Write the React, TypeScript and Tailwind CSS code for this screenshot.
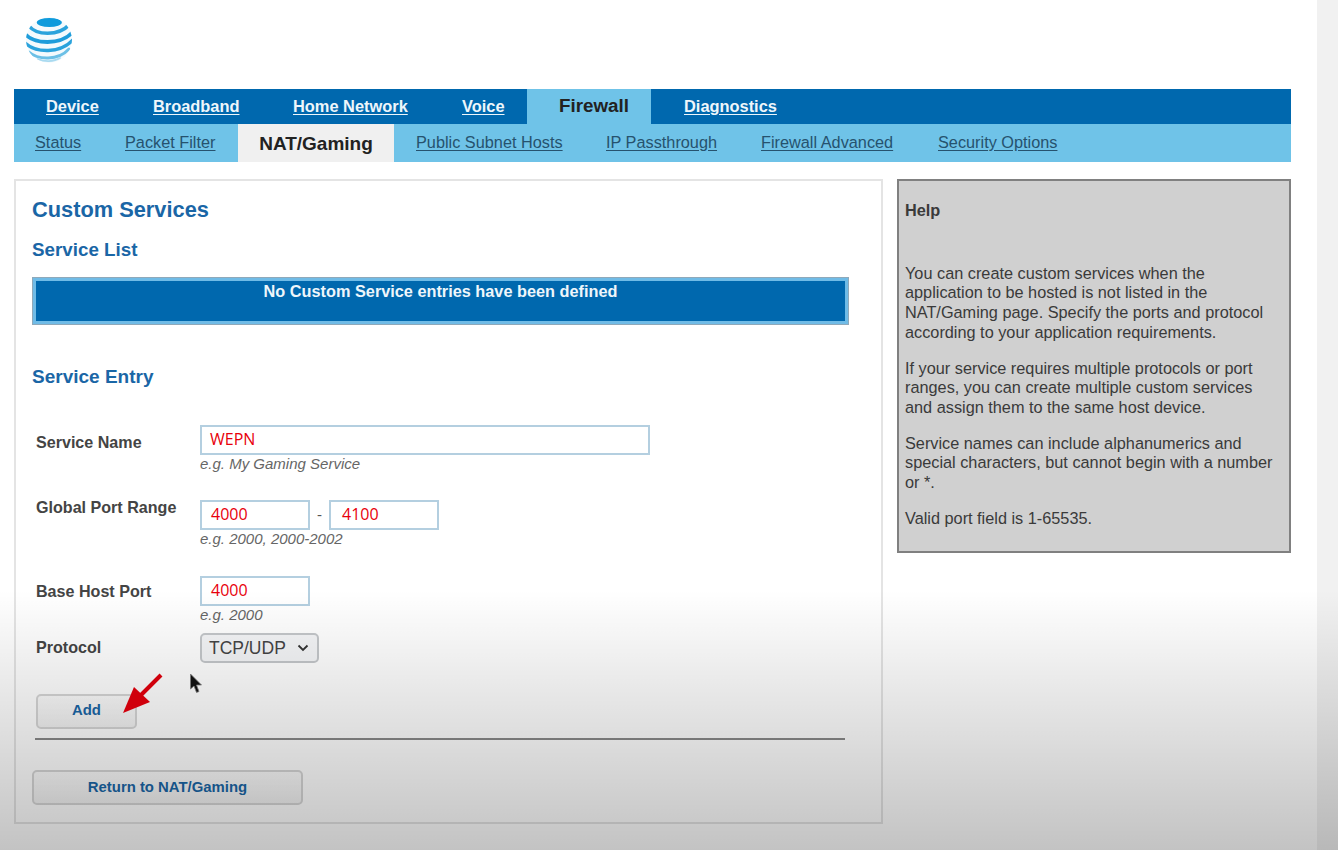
import React from "react";

const mainTabs = [
  { label: "Device", cls: "ml-[32px] w-[107px]" },
  { label: "Broadband", cls: "w-[140px]" },
  { label: "Home Network", cls: "w-[169px]" },
];
const subTabs = [
  { label: "Status", cls: "ml-[21px] w-[90px]" },
  { label: "Packet Filter", cls: "w-[113px]" },
];
const subTabsRight = [
  { label: "Public Subnet Hosts", cls: "ml-[22px] w-[190px]" },
  { label: "IP Passthrough", cls: "w-[155px]" },
  { label: "Firewall Advanced", cls: "w-[177px]" },
  { label: "Security Options", cls: "" },
];

function Logo() {
  return (
    <svg width="50" height="50" viewBox="0 0 50 50" className="ml-[10px] block">
      <defs>
        <clipPath id="globe">
          <circle cx="25" cy="25" r="23" />
        </clipPath>
      </defs>
      <g clipPath="url(#globe)" fill="none" strokeLinecap="round">
        <circle cx="25" cy="25" r="23" fill="#f4fafd" />
        <ellipse cx="25.3" cy="7.5" rx="12.5" ry="4.6" fill="#0f9bdc" />
        <path d="M5 11 C12 20 34 22 46 9" stroke="#2ba3dc" strokeWidth="3.6" />
        <path d="M1 19 C10 29 36 31 49 17" stroke="#1f9ddb" strokeWidth="3.8" />
        <path d="M1 28 C12 38 36 39 49 25" stroke="#2ba3dc" strokeWidth="3.4" />
        <path d="M5 37 C14 45 34 46 45 34" stroke="#6cc0e6" strokeWidth="2.8" />
        <path d="M14 44 C20 47 30 47 36 43" stroke="#a9daf0" strokeWidth="1.8" />
      </g>
    </svg>
  );
}

function MainLink({ label, cls }: { label: string; cls: string }) {
  return <a className={`block text-[16.4px] font-bold text-[#eef6fb] underline underline-offset-2 ${cls}`}>{label}</a>;
}

function SubLink({ label, cls }: { label: string; cls: string }) {
  return <a className={`block pb-[2px] text-[16.3px] text-[#26526e] underline underline-offset-2 ${cls}`}>{label}</a>;
}

function TextBox({ value, cls }: { value: string; cls: string }) {
  return (
    <div className={`h-[30px] border-2 border-[#b4cfe0] bg-white text-[16px] leading-[24px] text-[#e8000b] font-['Open_Sans',sans-serif] ${cls}`}>
      {value}
    </div>
  );
}

function Hint({ children }: { children: React.ReactNode }) {
  return <div className="text-[15px] italic leading-[18px] text-[#666666]">{children}</div>;
}

function Label({ children, cls = "" }: { children: React.ReactNode; cls?: string }) {
  return <div className={`w-[164px] text-[16.1px] font-bold leading-[20px] text-[#444444] ${cls}`}>{children}</div>;
}

export default function App() {
  return (
    <div className="relative flex h-[850px] w-[1338px] overflow-hidden bg-white font-['Liberation_Sans',sans-serif]">
      <div className="w-[1317px] pl-[14px] pr-[26px]">
        <div className="h-[89px] pt-[15px]">
          <Logo />
        </div>

        <nav className="flex h-[35px] items-center bg-[#0068ae]">
          {mainTabs.map((t) => (
            <MainLink key={t.label} {...t} />
          ))}
          <MainLink label="Voice" cls="w-[65px]" />
          <div className="flex h-[35px] w-[124px] items-center justify-center bg-[#6fc3e8] pl-[10px] text-[18.8px] font-bold text-[#222222]">
            Firewall
          </div>
          <MainLink label="Diagnostics" cls="ml-[33px]" />
        </nav>

        <nav className="flex h-[38px] items-center bg-[#6fc3e8]">
          {subTabs.map((t) => (
            <SubLink key={t.label} {...t} />
          ))}
          <div className="flex h-[38px] w-[156px] items-center justify-center bg-[#f0f0f0] pt-[2px] text-[19px] font-bold text-[#222222]">
            NAT/Gaming
          </div>
          {subTabsRight.map((t) => (
            <SubLink key={t.label} {...t} />
          ))}
        </nav>

        <div className="mt-[17px] flex items-start gap-[14px]">
          <section className="h-[645px] w-[869px] border-2 border-[#e4e4e4] bg-white pl-[16px]">
            <h1 className="mt-[15px] text-[21.8px] font-bold leading-[28px] text-[#1a66a6]">Custom Services</h1>
            <h2 className="mt-[14px] text-[18.8px] font-bold leading-[24px] text-[#1a66a6]">Service List</h2>

            <div className="mt-[16px] ml-[1px] h-[46px] w-[815px] border-[3px] border-[#70bbe6] bg-[#0068ae] text-center shadow-[0_0_0_1px_#8fa9ba]">
              <div className="text-[16.3px] font-bold leading-[20px] text-[#eef6fb]">No Custom Service entries have been defined</div>
            </div>

            <h2 className="mt-[41px] text-[19px] font-bold leading-[24px] text-[#1a66a6]">Service Entry</h2>

            <div className="ml-[4px]">
              <div className="mt-[36px] flex">
                <Label cls="mt-[7px]">Service Name</Label>
                <div>
                  <TextBox value="WEPN" cls="w-[450px] pl-[8px]" />
                  <Hint>e.g. My Gaming Service</Hint>
                </div>
              </div>

              <div className="mt-[27px] flex">
                <Label cls="-mt-[3px]">Global Port Range</Label>
                <div>
                  <div className="flex items-center">
                    <TextBox value="4000" cls="w-[110px] pl-[9px]" />
                    <span className="w-[19px] text-center text-[15px] text-[#555555]">-</span>
                    <TextBox value="4100" cls="w-[110px] pl-[11px]" />
                  </div>
                  <Hint>e.g. 2000, 2000-2002</Hint>
                </div>
              </div>

              <div className="mt-[28px] flex">
                <Label cls="mt-[5px]">Base Host Port</Label>
                <div>
                  <TextBox value="4000" cls="w-[110px] pl-[9px]" />
                  <Hint>e.g. 2000</Hint>
                </div>
              </div>

              <div className="mt-[9px] flex items-center">
                <Label cls="pb-[2px]">Protocol</Label>
                <div className="flex h-[30px] w-[119px] items-center rounded-[5px] border-2 border-[#c4c7ca] bg-[#f4f5f7] pl-[7px] text-[17.5px] text-[#444444]">
                  TCP/UDP
                  <svg width="12" height="8" viewBox="0 0 12 8" className="ml-[11px]">
                    <path d="M1.5 1.5 L6 6 L10.5 1.5" stroke="#333333" strokeWidth="1.8" fill="none" />
                  </svg>
                </div>
              </div>

              <div className="mt-[31px] flex h-[35px] w-[101px] items-center justify-center rounded-[5px] border-2 border-[#d6d6d6] bg-gradient-to-b from-[#fbfbfb] to-[#f2f2f2] pb-[3px] text-[14.9px] font-bold text-[#1a66a6]">
                Add
              </div>

              <div className="mt-[9px] -ml-[1px] h-[2px] w-[810px] bg-[#8a8a8a]" />
            </div>

            <div className="mt-[30px] flex h-[35px] w-[271px] items-center justify-center rounded-[5px] border-2 border-[#d6d6d6] bg-gradient-to-b from-[#fbfbfb] to-[#f2f2f2] pb-[1px] text-[14.9px] font-bold text-[#1a66a6]">
              Return to NAT/Gaming
            </div>
          </section>

          <aside className="h-[374px] w-[394px] border-2 border-[#808080] bg-[#d0d0d0] pl-[6px] pt-[20px] text-[16.3px] leading-[19.7px] text-[#3a3a3a]">
            <div className="font-bold">Help</div>
            <p className="mt-[43px]">
              You can create custom services when the
              <br />
              application to be hosted is not listed in the
              <br />
              NAT/Gaming page. Specify the ports and protocol
              <br />
              according to your application requirements.
            </p>
            <p className="mt-[16px]">
              If your service requires multiple protocols or port
              <br />
              ranges, you can create multiple custom services
              <br />
              and assign them to the same host device.
            </p>
            <p className="mt-[16px]">
              Service names can include alphanumerics and
              <br />
              special characters, but cannot begin with a number
              <br />
              or *.
            </p>
            <p className="mt-[16px]">Valid port field is 1-65535.</p>
          </aside>
        </div>
      </div>
      <div className="w-[21px] bg-[#f1f1f1]" />

      {/* video-style shade over the lower page */}
      <div className="pointer-events-none absolute inset-x-0 bottom-0 h-[260px] bg-gradient-to-b from-[#00000000] to-[#0000003c]" />

      {/* red annotation arrow */}
      <svg width="44" height="46" viewBox="0 0 44 46" className="absolute left-[121px] top-[672px]">
        <path d="M40 3 L17 26" stroke="#d0000c" strokeWidth="4" fill="none" />
        <path d="M2 41 L13 15 L29 30 Z" fill="#d0000c" />
      </svg>

      {/* mouse cursor */}
      <svg width="16" height="24" viewBox="0 0 16 24" className="absolute left-[189px] top-[673px]">
        <path d="M1.5 1 L1.5 16 L5 13 L7.5 19.5 L10 18.5 L7.5 12 L12.5 12 Z" fill="#111111" stroke="#777777" strokeWidth="0.8" />
      </svg>
    </div>
  );
}
